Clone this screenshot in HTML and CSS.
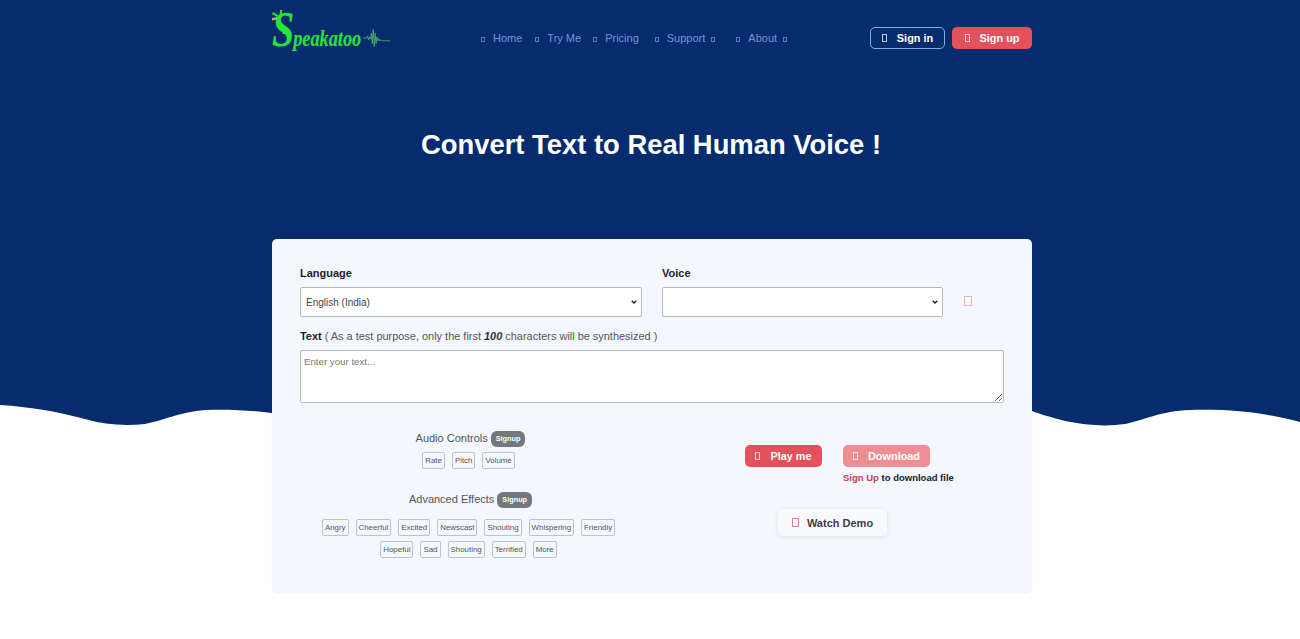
FILE: index.html
```html
<!DOCTYPE html>
<html lang="en">
<head>
  <meta charset="UTF-8">
  <title>Speakatoo</title>
  <link rel="stylesheet" href="styles.css">
</head>
<body>

<svg class="wave" viewBox="0 0 1300 426" preserveAspectRatio="none">
  <path d="M0 0H1300V422C1265 413 1235 409 1190 410C1160 411 1145 420 1125 424C1105 427 1085 425 1065 421C1050 417 1040 414 1032 411L272 413C250 410 225 409 205 410C180 412 165 420 145 424C125 426 105 425 85 419C55 411 30 407 0 405Z" fill="#062c6e"/>
</svg>

<div class="page">
  <header class="topbar">
    <a class="logo">
      <svg class="logo-bird" viewBox="0 0 20 24">
        <path d="M1 2l5 3-1 2-5-3zM8 0h2.400l-1 7H7.500z" fill="#35d43c"/>
        <path d="M0 8l5-1v2.500l-5 1z" fill="#d2a06c"/>
        <circle cx="13" cy="23" r="2.400" fill="#c98f5c"/>
      </svg>
      <span class="logo-text"><span class="logo-s">S</span>peakatoo</span>
      <svg class="logo-pulse" viewBox="0 0 30 18">
        <path d="M0 9h4l1-2 1 4 1-3 1 2 1-6 1 11 1-15 1 18 1-14 1 11 1-7 1 4 1-2 1 2 1-1 2 1h8" fill="none" stroke="#52c96b" stroke-width="0.8"/>
      </svg>
    </a>
    <nav class="nav">
      <a class="nav-link"><i class="tofu"></i>Home</a>
      <a class="nav-link"><i class="tofu"></i>Try Me</a>
      <a class="nav-link"><i class="tofu"></i>Pricing</a>
      <a class="nav-link"><i class="tofu"></i>Support<i class="tofu tofu-after"></i></a>
      <a class="nav-link"><i class="tofu"></i>About<i class="tofu tofu-after"></i></a>
    </nav>
    <div class="auth">
      <a class="btn btn-outline"><i class="tofu tofu-big"></i>Sign in</a>
      <a class="btn btn-red"><i class="tofu tofu-big"></i>Sign up</a>
    </div>
  </header>

  <h1 class="title">Convert Text to Real Human Voice !</h1>

  <main class="card">
    <div class="selects">
      <div class="field field-lang">
        <label>Language</label>
        <select><option>English (India)</option></select>
      </div>
      <div class="field field-voice">
        <label>Voice</label>
        <select><option></option></select>
      </div>
      <i class="tofu tofu-play"></i>
    </div>

    <p class="text-label"><strong>Text</strong> ( As a test purpose, only the first <b><em>100</em></b> characters will be synthesized )</p>
    <textarea class="text-input" placeholder="Enter your text..."></textarea>

    <div class="lower">
      <section class="controls">
        <h3 class="group-title">Audio Controls <span class="badge">Signup</span></h3>
        <div class="tags">
          <span class="tag">Rate</span>
          <span class="tag">Pitch</span>
          <span class="tag">Volume</span>
        </div>
        <h3 class="group-title group-effects">Advanced Effects <span class="badge">Signup</span></h3>
        <div class="tags tags-effects">
          <span class="tag">Angry</span>
          <span class="tag">Cheerful</span>
          <span class="tag">Excited</span>
          <span class="tag">Newscast</span>
          <span class="tag">Shouting</span>
          <span class="tag">Whispering</span>
          <span class="tag">Friendly</span>
          <span class="tag">Hopeful</span>
          <span class="tag">Sad</span>
          <span class="tag">Shouting</span>
          <span class="tag">Terrified</span>
          <span class="tag">More</span>
        </div>
      </section>

      <section class="actions">
        <div class="action-row">
          <a class="btn btn-red btn-play"><i class="tofu tofu-big"></i>Play me</a>
          <div class="download">
            <a class="btn btn-red btn-faded"><i class="tofu tofu-big"></i>Download</a>
            <p class="download-note"><a>Sign Up</a> to download file</p>
          </div>
        </div>
        <a class="demo"><i class="tofu tofu-demo"></i>Watch Demo</a>
      </section>
    </div>
  </main>
</div>

</body>
</html>
```

FILE: styles.css
```css
* {
  box-sizing: border-box;
}

body {
  margin: 0;
  height: 639px;
  overflow: hidden;
  position: relative;
  background: #fff;
  font-family: "Liberation Sans", Arial, sans-serif;
  color: #222;
}

.wave {
  position: absolute;
  top: 0;
  left: 0;
  width: 1300px;
  height: 426px;
}

.page {
  position: relative;
  width: 760px;
  margin-left: 272px;
}

.tofu {
  display: inline-block;
  width: 4px;
  height: 5px;
  margin-right: 8px;
  border: 1px solid currentColor;
  opacity: 0.75;
}

.tofu-after {
  margin: 0 0 0 6px;
}

.tofu-big {
  width: 5px;
  height: 8px;
  margin-right: 10px;
}

/* header */
.topbar {
  display: flex;
  align-items: flex-start;
  height: 91px;
}

.logo {
  position: relative;
  display: flex;
  align-items: flex-end;
  width: 121px;
  height: 54px;
  color: #22e63a;
}

.logo-bird {
  position: absolute;
  top: 10px;
  left: 0;
  width: 20px;
  height: 24px;
}

.logo-text {
  font-family: "Liberation Serif", serif;
  font-style: italic;
  font-weight: bold;
  font-size: 18.5px;
  line-height: 20px;
  letter-spacing: -0.1px;
  white-space: nowrap;
  margin-bottom: 6px;
  transform: scaleY(1.25);
}

.logo-s {
  font-size: 40px;
  line-height: 20px;
  margin-right: -1px;
}

.logo-pulse {
  width: 28px;
  height: 18px;
  margin: 0 0 7px 2px;
}

.nav {
  display: flex;
  gap: 13px;
  margin: 31px 0 0 88px;
  width: 389px;
}

.nav-link {
  font-size: 11px;
  line-height: 14px;
  color: #7c8fdb;
  white-space: nowrap;
}

.nav-link:nth-child(3) {
  margin-left: -1px;
}

.nav-link:nth-child(4) {
  margin-left: 3px;
}

.nav-link:nth-child(5) {
  margin-left: 8px;
}

.auth {
  display: flex;
  gap: 7px;
  margin: 27px 0 0 0;
}

.btn {
  display: flex;
  align-items: center;
  justify-content: center;
  height: 22px;
  border-radius: 5px;
  font-size: 10.9px;
  font-weight: bold;
  color: #fff;
  white-space: nowrap;
}

.btn-outline {
  width: 75px;
  border: 1px solid #86a9e8;
}

.btn-red {
  width: 80px;
  background: #e5515b;
}

.title {
  margin: 0;
  height: 148px;
  padding-top: 34px;
  text-align: center;
  font-size: 27.4px;
  line-height: 40px;
  font-weight: bold;
  color: #fff;
  width: 758px;
}

/* main card */
.card {
  height: 353px;
  padding: 27px 28px 0;
  background: #f4f7fd;
  border-radius: 5px;
  box-shadow: 0 1px 2px rgba(0, 0, 0, 0.05);
}

.selects {
  display: flex;
  align-items: flex-end;
  gap: 20px;
}

.field label {
  display: block;
  margin-bottom: 6px;
  font-size: 11px;
  line-height: 15px;
  font-weight: bold;
}

.field select {
  display: block;
  width: 100%;
  height: 30px;
  padding: 0 5px;
  appearance: none;
  background: #fff url("data:image/svg+xml,%3Csvg xmlns='http://www.w3.org/2000/svg' width='6' height='4'%3E%3Cpath d='M.7.7L3 3l2.300-2.300' fill='none' stroke='%23222' stroke-width='1.400'/%3E%3C/svg%3E") no-repeat right 4px center;
  border: 1px solid #b5b8bd;
  border-radius: 2px;
  font-family: inherit;
  font-size: 10px;
  color: #444;
}

.field-lang {
  width: 342px;
}

.field-voice {
  width: 281px;
}

.tofu-play {
  width: 8px;
  height: 10px;
  margin: 0 0 11px 1px;
  border-color: #f0b4bc;
  opacity: 1;
}

.text-label {
  margin: 12px 0 6px;
  font-size: 10.95px;
  line-height: 15px;
  color: #555;
  width: 400px;
  white-space: nowrap;
}

.text-label strong {
  color: #222;
}

.text-label b {
  color: #333;
}

.text-input {
  display: block;
  width: 704px;
  height: 53px;
  padding: 5px 3px;
  background: #fff;
  border: 1px solid #b5b8bd;
  border-radius: 2px;
  font-family: inherit;
  font-size: 9.7px;
}

.text-input::placeholder {
  color: #777;
}

.lower {
  display: flex;
}

.controls {
  width: 337px;
  padding-top: 27px;
}

.group-title {
  display: flex;
  justify-content: center;
  align-items: center;
  gap: 3px;
  height: 16px;
  margin: 0 0 0 4px;
  font-size: 11px;
  line-height: 16px;
  font-weight: normal;
  color: #555;
}

.group-effects {
  margin-top: 22px;
}

.badge {
  padding: 0 5px;
  background: #74777b;
  border-radius: 6px;
  font-size: 7.3px;
  line-height: 16px;
  font-weight: bold;
  color: #fff;
  position: relative;
  top: 1px;
}

.tags {
  display: flex;
  flex-wrap: wrap;
  justify-content: center;
  gap: 7px;
  margin-top: 6px;
}

.tags-effects {
  row-gap: 5px;
  margin-top: 12px;
  padding: 0 20px;
}

.tag {
  padding: 0 2px;
  border: 1px solid #bfc2c6;
  border-radius: 2px;
  font-size: 7.9px;
  line-height: 15px;
  color: #555;
}

.actions {
  padding: 42px 0 0 108px;
}

.action-row {
  display: flex;
  gap: 21px;
}

.btn-play {
  width: 77px;
}

.btn-faded {
  width: 87px;
  background: #ef8d93;
}

.download-note {
  margin: 4px 0 0;
  font-size: 9.5px;
  line-height: 14px;
  font-weight: bold;
  color: #222;
  white-space: nowrap;
}

.download-note a {
  color: #b9404f;
}

.demo {
  display: flex;
  align-items: center;
  justify-content: center;
  width: 109px;
  height: 27px;
  margin: 24px 0 0 33px;
  background: #f8f9fd;
  border-radius: 5px;
  box-shadow: 0 1px 5px rgba(0, 0, 0, 0.1);
  font-size: 11px;
  font-weight: bold;
  color: #3c3f4a;
}

.tofu-demo {
  width: 7px;
  height: 9px;
  margin-right: 8px;
  border-color: #d0586a;
}
```
